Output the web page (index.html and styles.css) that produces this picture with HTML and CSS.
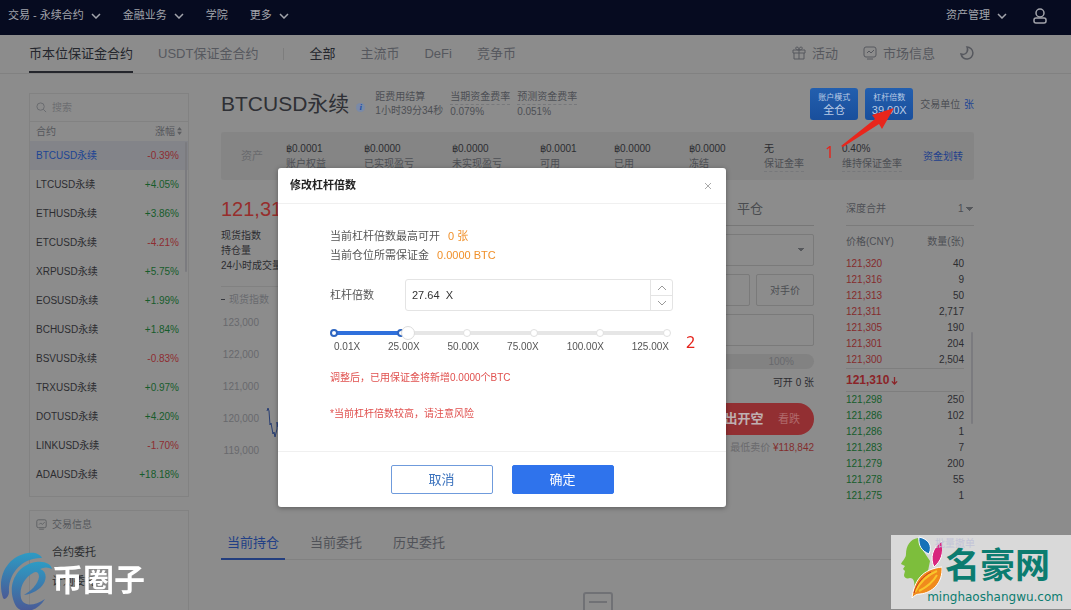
FILE: index.html
```html
<!DOCTYPE html>
<html lang="zh-CN">
<head>
    <meta charset="UTF-8">
    <meta name="viewport" content="width=device-width, initial-scale=1.0">
    <title>BTCUSD永续</title>
    <link rel="stylesheet" href="styles.css">
</head>
<body>
    <header class="topbar">
      <a href="#">交易 - 永续合约 <svg class="chevron" viewBox="0 0 10 6"><path d="M1 1l4 4 4-4"/></svg></a>
      <a href="#">金融业务 <svg class="chevron" viewBox="0 0 10 6"><path d="M1 1l4 4 4-4"/></svg></a>
      <a href="#">学院</a>
      <a href="#">更多 <svg class="chevron" viewBox="0 0 10 6"><path d="M1 1l4 4 4-4"/></svg></a>
      <a href="#" class="push">资产管理 <svg class="chevron" viewBox="0 0 10 6"><path d="M1 1l4 4 4-4"/></svg></a>
      <a href="#" class="account" aria-label="账户"><svg class="user" viewBox="0 0 14 16"><circle cx="7" cy="5" r="4"/><rect x="1" y="10" width="12" height="5" rx="2"/></svg></a>
    </header>

    <nav class="subnav">
      <a href="#" class="active">币本位保证金合约</a>
      <a href="#">USDT保证金合约</a>
      <span class="divider"></span>
      <a href="#" class="dark">全部</a>
      <a href="#">主流币</a>
      <a href="#">DeFi</a>
      <a href="#">竞争币</a>
      <a href="#" class="push"><svg class="icon" viewBox="0 0 14 14"><path d="M1 4h12v3H1zM2 7v6h10V7M7 4v9M7 4C3 4 3 1 5 1s2 3 2 3 0-3 2-3 2 3-2 3"/></svg>活动</a>
      <a href="#"><svg class="icon" viewBox="0 0 14 14"><path d="M3 1h8a2 2 0 0 1 2 2v6a2 2 0 0 1-2 2H3a2 2 0 0 1-2-2V3a2 2 0 0 1 2-2zM4 13h6M4 7l2-2 2 2 3-3"/></svg>市场信息</a>
      <a href="#" aria-label="夜间模式"><svg class="icon moon" viewBox="0 0 14 14"><path d="M7 1a6 6 0 1 1-6 7c3 1 5 0 6-2s1-3 0-5z"/></svg></a>
    </nav>

    <main class="page">
      <aside class="sidebar">
        <section class="box market">
          <label class="search">
            <svg class="lens" viewBox="0 0 12 12"><circle cx="5" cy="5" r="4"/><path d="M8 8l3 3"/></svg>
            <input type="text" placeholder="搜索">
          </label>
          <table class="contracts">
            <thead><tr><th>合约</th><th>涨幅<svg class="sort" viewBox="0 0 6 10"><path d="M3 0l3 4H0zM3 10L0 6h6z"/></svg></th></tr></thead>
            <tbody>
              <tr class="current"><td>BTCUSD永续</td><td class="down">-0.39%</td></tr>
              <tr><td>LTCUSD永续</td><td class="up">+4.05%</td></tr>
              <tr><td>ETHUSD永续</td><td class="up">+3.86%</td></tr>
              <tr><td>ETCUSD永续</td><td class="down">-4.21%</td></tr>
              <tr><td>XRPUSD永续</td><td class="up">+5.75%</td></tr>
              <tr><td>EOSUSD永续</td><td class="up">+1.99%</td></tr>
              <tr><td>BCHUSD永续</td><td class="up">+1.84%</td></tr>
              <tr><td>BSVUSD永续</td><td class="down">-0.83%</td></tr>
              <tr><td>TRXUSD永续</td><td class="up">+0.97%</td></tr>
              <tr><td>DOTUSD永续</td><td class="up">+4.20%</td></tr>
              <tr><td>LINKUSD永续</td><td class="down">-1.70%</td></tr>
              <tr><td>ADAUSD永续</td><td class="up">+18.18%</td></tr>
            </tbody>
          </table>
          <span class="scrollbar"></span>
        </section>
        <section class="box info">
          <h2><svg class="icon" viewBox="0 0 14 14"><path d="M3 1h8a2 2 0 0 1 2 2v6a2 2 0 0 1-2 2H3a2 2 0 0 1-2-2V3a2 2 0 0 1 2-2zM4 13h6M4 7l2-2 2 2 3-3"/></svg>交易信息</h2>
          <a href="#">合约委托</a>
          <a href="#">计划委托</a>
        </section>
      </aside>

      <div class="content">
        <div class="heading">
          <h1>BTCUSD永续</h1>
          <span class="tip">i</span>
          <dl class="rates">
            <div><dt>距费用结算</dt><dd>1小时39分34秒</dd></div>
            <div class="dashed"><dt>当期资金费率</dt><dd>0.079%</dd></div>
            <div class="dashed"><dt>预测资金费率</dt><dd>0.051%</dd></div>
          </dl>
          <button class="mode"><small>账户模式</small>全仓</button>
          <button class="mode"><small>杠杆倍数</small>39.00X</button>
          <span class="unit">交易单位 <a href="#">张</a></span>
        </div>

        <div class="assets">
          <span class="label">资产</span>
          <div><b>฿0.0001</b><span>账户权益</span></div>
          <div><b>฿0.0000</b><span>已实现盈亏</span></div>
          <div><b>฿0.0000</b><span>未实现盈亏</span></div>
          <div><b>฿0.0001</b><span>可用</span></div>
          <div><b>฿0.0000</b><span>已用</span></div>
          <div><b>฿0.0000</b><span>冻结</span></div>
          <div class="dashed"><b>无</b><span>保证金率</span></div>
          <div class="dashed"><b>0.40%</b><span>维持保证金率</span></div>
          <a href="#">资金划转</a>
        </div>

        <div class="trade">
          <section class="chart">
            <strong class="price">121,310</strong>
            <ul class="facts"><li>现货指数</li><li>持仓量</li><li>24小时成交量</li></ul>
            <div class="legend"><span>现货指数</span><span></span></div>
            <div class="plot">
              <ol class="axis"><li>123,000</li><li>122,000</li><li>121,000</li><li>120,000</li><li>119,000</li></ol>
              <svg class="line" viewBox="0 0 40 160"><path d="M1 104l1-3 1 3 1 14 1-2 2 11 1-2 1 5 2-8 0-7 1 5 1-9 2 6"/></svg>
            </div>
          </section>

          <section class="order">
            <div class="order-tabs"><a href="#">开仓</a><a href="#">平仓</a></div>
            <select class="field" aria-label="委托类型"><option></option></select>
            <div class="pair">
              <input class="field" type="text" aria-label="价格">
              <button class="field">对手价</button>
            </div>
            <input class="field" type="text" aria-label="数量">
            <div class="percent"><span>100%</span></div>
            <p class="open">可开 0 张</p>
            <button class="sell">卖出开空 <small>看跌</small></button>
            <p class="ask">最低卖价 <b>¥118,842</b></p>
          </section>

          <section class="book">
            <div class="depth"><label for="depth">深度合并</label><select id="depth"><option>1</option></select></div>
            <table>
              <thead><tr><th>价格(CNY)</th><th>数量(张)</th></tr></thead>
              <tbody class="asks">
                <tr><td>121,320</td><td>40</td></tr>
                <tr><td>121,316</td><td>9</td></tr>
                <tr><td>121,313</td><td>50</td></tr>
                <tr><td>121,311</td><td>2,717</td></tr>
                <tr><td>121,305</td><td>190</td></tr>
                <tr><td>121,301</td><td>204</td></tr>
                <tr><td>121,300</td><td>2,504</td></tr>
              </tbody>
              <tbody class="last"><tr><td colspan="2">121,310<svg class="arrow-down" viewBox="0 0 8 10"><path d="M4 1v8M1 6l3 3 3-3"/></svg></td></tr></tbody>
              <tbody class="bids">
                <tr><td>121,298</td><td>250</td></tr>
                <tr><td>121,286</td><td>102</td></tr>
                <tr><td>121,286</td><td>1</td></tr>
                <tr><td>121,283</td><td>7</td></tr>
                <tr><td>121,279</td><td>200</td></tr>
                <tr><td>121,278</td><td>55</td></tr>
                <tr><td>121,275</td><td>1</td></tr>
              </tbody>
            </table>
            <span class="scrollbar"></span>
          </section>
        </div>

        <nav class="tabs">
          <a href="#" class="active">当前持仓</a>
          <a href="#">当前委托</a>
          <a href="#">历史委托</a>
        </nav>
        <svg class="empty" viewBox="0 0 30 30"><rect x="1" y="1" width="28" height="28" rx="2"/><path d="M6 10h18"/></svg>
      </div>
    </main>

    <div class="overlay">
      <form class="modal" role="dialog" aria-labelledby="modal-title">
        <header class="modal-head">
          <h2 id="modal-title">修改杠杆倍数</h2>
          <button type="button" class="close" aria-label="关闭"><svg viewBox="0 0 8 8"><path d="M1 1l6 6M7 1L1 7"/></svg></button>
        </header>
        <div class="modal-body">
          <p>当前杠杆倍数最高可开 <em>0 张</em></p>
          <p>当前仓位所需保证金 <em>0.0000 BTC</em></p>
          <div class="lever">
            <label for="lever">杠杆倍数</label>
            <div class="stepper">
              <input id="lever" type="text" value="27.64  X">
              <div class="steps">
                <button type="button" aria-label="增加"><svg class="chevron" viewBox="0 0 10 6"><path d="M1 5l4-4 4 4"/></svg></button>
                <button type="button" aria-label="减少"><svg class="chevron" viewBox="0 0 10 6"><path d="M1 1l4 4 4-4"/></svg></button>
              </div>
            </div>
          </div>
          <div class="slider">
            <div class="dots"><i class="on"></i><i class="on"></i><i></i><i></i><i></i><i></i></div>
            <input type="range" min="0" max="125" step="0.01" value="27.64" aria-label="杠杆倍数">
          </div>
          <div class="marks"><span>0.01X</span><span>25.00X</span><span>50.00X</span><span>75.00X</span><span>100.00X</span><span>125.00X</span></div>
          <p class="warn">调整后，已用保证金将新增0.0000个BTC</p>
          <p class="warn">*当前杠杆倍数较高，请注意风险</p>
        </div>
        <footer class="modal-foot">
          <button type="button" class="cancel">取消</button>
          <button type="button" class="confirm">确定</button>
        </footer>
      </form>
    </div>

    <!-- step marks -->
    <span class="step step-one">1</span>
    <svg class="pointer" viewBox="0 0 56 42"><path d="M2 39L36 12l-3-4L55 1 43 22l-3-5L4 40z"/></svg>
    <span class="step step-two">2</span>

    <div class="stamp-left">
      <svg viewBox="0 0 52 58">
        <defs><linearGradient id="swirl" x1="0" y1="0" x2="0" y2="1"><stop offset="0" stop-color="#2d9bc4"/><stop offset="1" stop-color="#4a5a96"/></linearGradient></defs>
        <path fill="url(#swirl)" d="M3 46C-4 24 8 4 28 1c7-1 12 1 14 5C24 5 8 20 9 40c0 4-4 9-6 6z"/>
        <path fill="url(#swirl)" d="M14 50C7 32 17 13 36 10c9-1 15 2 16 7-4-2-8-2-12 0 6 2 7 8 4 14-4 7-12 11-20 12 7-4 14-11 15-18 0-5-3-6-6-4-9 5-14 15-12 25 2 8 12 9 24 1-5 8-12 12-19 12-6 0-10-3-12-9z"/>
      </svg>
      <span>币圈子</span>
    </div>

    <div class="stamp-right">
      <svg viewBox="0 0 42 64">
        <path fill="#7dbe3c" d="M18 2C10 3 6 10 6 18c0 4-3 6-5 10l4 2-2 3 2 2-1 4c0 3 3 4 6 3 4 0 5 4 4 11l12-8 4-20-8-12z"/>
        <path fill="#1672b8" stroke="#fff" d="M19 1c9 2 14 8 10 17-7-3-11-8-10-17z"/>
        <path fill="#d8257d" stroke="#fff" d="M42 5c2 13-1 20-8 26-4-9-2-19 8-26z"/>
        <path fill="#f08a1c" stroke="#fff" d="M12 62C14 45 22 33 42 31c1 16-10 26-22 27-4 0-6 2-8 4z"/>
        <path fill="none" stroke="#f9c62b" stroke-width="2" d="M15 56c5-10 12-17 22-21M19 55c8-4 14-9 18-16"/>
        <path fill="none" stroke="#c8391e" d="M14 57c3-10 9-17 17-21"/>
      </svg>
      <strong>名豪网</strong>
      <span>minghaoshangwu.com</span>
      <a href="#">批量撤单</a>
    </div>
</body>
</html>
```

FILE: styles.css
```css
* {
  box-sizing: border-box;
}

body {
  margin: 0;
  height: 100vh;
  overflow: hidden;
  background: #8c8c8c;
  color: #2c2d31;
  font: 10px/15px "Liberation Sans", "Noto Sans CJK SC", sans-serif;
}

a {
  color: inherit;
  text-decoration: none;
}

h1, h2, p, dl, dd, ul, ol {
  margin: 0;
  padding: 0;
  font-weight: normal;
  list-style: none;
}

button, input, select {
  margin: 0;
  padding: 0;
  border: 0;
  background: none;
  color: inherit;
  font: inherit;
}

svg {
  fill: none;
  stroke: currentColor;
  flex: none;
}

table {
  width: 100%;
  border-collapse: collapse;
}

th, td {
  padding: 0;
  font-weight: normal;
  text-align: left;
}

th:last-child, td:last-child {
  text-align: right;
}

.push {
  margin-left: auto;
}

.chevron {
  width: 10px;
  height: 6px;
  stroke-width: 1.5;
}

.icon {
  width: 14px;
  height: 14px;
}

/* top bar */
.topbar {
  display: flex;
  align-items: center;
  gap: 22px;
  height: 35px;
  padding: 0 24px 4px 8px;
  background: #060b20;
  color: #a2a4ab;
  font-size: 11px;
}

.topbar a {
  display: flex;
  align-items: center;
  gap: 7px;
}

.topbar .account {
  margin-left: 4px;
}

.user {
  width: 14px;
  height: 16px;
  stroke-width: 1.5;
}

.subnav {
  display: flex;
  align-items: center;
  gap: 25px;
  height: 39px;
  padding: 0 97px 0 29px;
  border-bottom: 1px solid #818181;
  color: #56585e;
  font-size: 13px;
}

.subnav a {
  display: flex;
  align-items: center;
  gap: 6px;
  height: 38px;
  padding-bottom: 2px;
}

.subnav .active {
  padding-bottom: 0;
  border-bottom: 2px solid #24262c;
  color: #24262c;
}

.subnav .dark {
  color: #24262c;
}

.subnav .divider {
  width: 1px;
  height: 12px;
  background: #7d7d7d;
}

.moon {
  stroke-width: 1.5;
}

.page {
  display: flex;
  gap: 32px;
  padding: 13px 97px 0 29px;
}

.sidebar {
  flex: none;
  width: 160px;
  padding-top: 6px;
}

.box {
  position: relative;
  border: 1px solid #828282;
}

.scrollbar {
  position: absolute;
  right: 1px;
  top: 48px;
  width: 2px;
  height: 130px;
  border-radius: 1px;
  background: #7b7b7f;
}

.market {
  margin-bottom: 13px;
  padding-bottom: 7px;
}

.search {
  display: flex;
  align-items: center;
  gap: 5px;
  height: 28px;
  padding: 0 6px;
  border-bottom: 1px solid #828282;
  color: #67696d;
}

.search input {
  min-width: 0;
  flex: 1;
}

.search input::placeholder {
  color: #6d6e71;
}

.lens {
  width: 11px;
  height: 11px;
}

.contracts th {
  height: 19px;
  padding: 0 6px;
  color: #54565b;
}

.sort {
  width: 5px;
  height: 8px;
  margin-left: 2px;
  fill: #5c5d60;
  stroke: none;
}

.contracts td {
  height: 29px;
  padding: 0 9px 0 6px;
}

.current {
  background: #838489;
  color: #1d4494;
}

.up {
  color: #165c2b;
}

.down {
  color: #8e2c31;
}

.info {
  padding: 3px 6px 14px;
  color: #2b2c2f;
  line-height: 29px;
}

.info h2 {
  display: flex;
  align-items: center;
  gap: 5px;
  height: 20px;
  margin-bottom: 4px;
  color: #57595d;
  font-size: 10px;
}

.info .icon {
  width: 11px;
  height: 11px;
}

.info a {
  display: block;
  padding-left: 16px;
  font-size: 11px;
}

/* heading row */
.content {
  flex: 1;
  min-width: 0;
}

.heading {
  display: flex;
  align-items: center;
  gap: 7px;
  height: 34px;
}

.heading h1 {
  font-size: 21px;
  line-height: 34px;
  color: #2f3035;
}

.tip {
  width: 9px;
  height: 9px;
  margin: 6px 3px 0 0;
  border-radius: 50%;
  background: #7a8aa8;
  color: #1d4fa8;
  font: italic bold 9px/9px "Liberation Serif", serif;
  text-align: center;
}

.rates {
  display: flex;
  gap: 7px;
  margin-right: auto;
  color: #4d4f54;
  line-height: 14px;
}

.dashed dt, .dashed span {
  border-bottom: 1px dashed #77787b;
}

.mode {
  width: 48px;
  height: 32px;
  border-radius: 3px;
  background: linear-gradient(#235fae, #194f9c);
  color: #b9cbe5;
  font-size: 11px;
  line-height: 12px;
}

.mode small {
  display: block;
  font-size: 8px;
}

.unit {
  color: #4d4f54;
}

.unit a {
  margin-left: 1px;
  color: #1d4494;
}

.assets {
  display: grid;
  grid-template-columns: 45fr 78fr 88fr 88fr 74fr 75fr 75fr 78fr 81fr 51fr;
  align-items: center;
  height: 48px;
  margin-top: 11px;
  padding-left: 20px;
  background: #858585;
  border-radius: 3px;
  color: #4d4f54;
}

.assets b, .assets span {
  display: block;
  width: fit-content;
  font-weight: normal;
}

.assets b {
  color: #2c2d31;
}

.assets .label {
  color: #696a6d;
  font-size: 11px;
}

.assets a {
  color: #223f8c;
}

.trade {
  display: grid;
  grid-template-columns: 1fr 256px 128px;
  gap: 32px;
  padding-top: 18px;
}

/* chart */
.price {
  display: block;
  color: #972e2c;
  font-size: 20px;
  font-weight: normal;
  line-height: 22px;
}

.facts {
  padding: 8px 0 13px;
  line-height: 15px;
}

.legend {
  display: flex;
  gap: 9px;
  border-top: 1px solid #818181;
  padding: 5px 0 0;
  color: #686a6e;
}

.legend span {
  display: flex;
  align-items: center;
  gap: 4px;
}

.legend span::before {
  content: "";
  width: 4px;
  height: 1px;
  background: #35373d;
}

.plot {
  display: flex;
  gap: 7px;
}

.axis {
  width: 38px;
  color: #68696d;
  line-height: 32px;
  text-align: right;
}

.line {
  width: 40px;
  height: 160px;
  color: #283e73;
}

/* order form */
.order-tabs {
  display: grid;
  grid-template-columns: 1fr 1fr;
  height: 28px;
  margin-bottom: 8px;
  border-bottom: 1px solid #777;
  color: #4a4c50;
  font-size: 13px;
  line-height: 22px;
  text-align: center;
}

.field {
  display: block;
  width: 100%;
  height: 32px;
  margin-bottom: 8px;
  border: 1px solid #7a7a7a;
  border-radius: 2px;
  color: #4b4d52;
}

select {
  appearance: none;
  background: linear-gradient(to bottom right, #55575b 50%, transparent 50%) right 8px center / 4px 4px no-repeat, linear-gradient(to bottom left, #55575b 50%, transparent 50%) right 12px center / 4px 4px no-repeat;
}

.pair {
  display: grid;
  grid-template-columns: 1fr 58px;
  gap: 6px;
}

.percent {
  height: 15px;
  padding-right: 20px;
  border-radius: 8px;
  background: #828282;
  color: #68696d;
  text-align: right;
}

.open {
  padding: 6px 0 13px;
  text-align: right;
}

.sell {
  display: block;
  width: 126px;
  height: 32px;
  margin-left: auto;
  padding-right: 14px;
  border-radius: 16px;
  background: #922f32;
  color: #bfb0b2;
  font-size: 13px;
  font-weight: bold;
  text-align: right;
}

.sell small {
  margin-left: 11px;
  color: #b06a6c;
  font-size: 11px;
  font-weight: normal;
}

.ask {
  padding-top: 5px;
  color: #6a6a6c;
  text-align: right;
}

.ask b {
  color: #832e2e;
  font-weight: normal;
}

/* order book */
.book {
  position: relative;
}

.book .scrollbar {
  top: 134px;
  height: 92px;
}

.depth {
  display: flex;
  justify-content: space-between;
  height: 28px;
  border-bottom: 1px solid #7b7b7b;
  color: #4d4f54;
  line-height: 22px;
}

.depth select {
  width: 16px;
  height: 22px;
  background-position: right 0 center, right 4px center;
}

.book table {
  width: 118px;
}

.book th {
  height: 30px;
  color: #4d4f54;
}

.book td {
  height: 16px;
  line-height: 16px;
}

.asks td:first-child {
  color: #852b2d;
}

.bids td:first-child {
  color: #155c2b;
}

.book .last td {
  height: 23px;
  border-top: 1px solid #7e7e7e;
  border-bottom: 1px solid #7e7e7e;
  color: #8b2428;
  font-size: 12px;
  font-weight: bold;
  text-align: left;
}

.arrow-down {
  width: 7px;
  height: 9px;
  margin-left: 2px;
  vertical-align: -1px;
  stroke-width: 1.5;
}

.tabs {
  display: flex;
  gap: 19px;
  height: 34px;
  margin-top: 22px;
  border-bottom: 1px solid #818181;
  color: #505258;
  font-size: 13px;
  line-height: 34px;
}

.tabs a {
  height: 34px;
  padding: 0 6px;
}

.tabs .active {
  border-bottom: 2px solid #233e7e;
  color: #213f86;
}

.empty {
  display: block;
  width: 30px;
  height: 30px;
  margin: 32px auto 0;
  color: #707175;
  stroke-width: 2;
}

/* leverage dialog */
.overlay {
  position: fixed;
  inset: 0;
  padding: 168px 67px 0 0;
  display: flex;
  justify-content: center;
  align-items: flex-start;
}

.modal {
  width: 448px;
  border-radius: 3px;
  background: #fff;
  box-shadow: 0 1px 5px rgba(0, 0, 0, 0.35);
  color: #555;
  font-size: 11px;
}

.modal-head {
  display: flex;
  align-items: center;
  justify-content: space-between;
  height: 36px;
  padding: 0 14px 0 12px;
  border-bottom: 1px solid #f0f0f0;
}

.modal-head h2 {
  color: #222;
  font-size: 11px;
  font-weight: bold;
}

.close {
  display: flex;
  color: #aaa;
}

.close svg {
  width: 8px;
  height: 8px;
}

.modal-body {
  padding: 23px 53px 27px 52px;
  line-height: 19px;
}

.modal-body em {
  margin-left: 5px;
  color: #f0902a;
  font-style: normal;
}

.lever {
  display: flex;
  align-items: center;
  justify-content: space-between;
  margin-top: 14px;
}

.stepper {
  display: flex;
  width: 268px;
  height: 32px;
  border: 1px solid #e4e4e4;
  border-radius: 3px;
}

.stepper input {
  flex: 1;
  min-width: 0;
  padding-left: 6px;
  color: #333;
  white-space: pre;
}

.steps {
  display: grid;
  grid-template-rows: 1fr 1fr;
  width: 22px;
  border-left: 1px solid #e4e4e4;
  color: #999;
}

.steps button {
  display: flex;
  align-items: center;
  justify-content: center;
}

.steps button + button {
  border-top: 1px solid #e4e4e4;
}

.steps .chevron {
  stroke-width: 1;
}

.slider {
  position: relative;
  height: 14px;
  margin: 15px -1px 0 -3px;
}

.dots {
  display: flex;
  justify-content: space-between;
  align-items: center;
  height: 14px;
  padding: 0 3px;
  background: linear-gradient(to right, #2f70dc 23%, #e6e6e6 23%) center / calc(100% - 14px) 4px no-repeat;
}

.dots i {
  width: 8px;
  height: 8px;
  border: 1px solid #e0e0e0;
  border-radius: 50%;
  background: #fff;
}

.dots .on {
  border: 2px solid #2f66c0;
}

.slider input {
  position: absolute;
  inset: 0;
  width: 100%;
  height: 14px;
  appearance: none;
}

.slider input::-webkit-slider-thumb {
  appearance: none;
  width: 14px;
  height: 14px;
  border: 1px solid #dcdcdc;
  border-radius: 50%;
  background: #fff;
}

.marks {
  display: flex;
  justify-content: space-between;
  padding: 0 4px;
  font-size: 10px;
  line-height: 14px;
}

.warn {
  margin-top: 16px;
  color: #e0504e;
  font-size: 10px;
  line-height: 20px;
}

.marks + .warn {
  margin-top: 14px;
}

.modal-foot {
  display: flex;
  justify-content: center;
  gap: 19px;
  padding: 13px 0;
  border-top: 1px solid #f0f0f0;
}

.modal-foot button {
  width: 102px;
  height: 29px;
  border: 1px solid #2f73ec;
  border-radius: 2px;
  font-size: 13px;
}

.modal-foot .cancel {
  border-color: #6f9bdc;
  color: #3b72bd;
}

.confirm {
  background: #2f73ec;
  color: #fff;
}

.step {
  position: fixed;
  color: #e5231b;
  font: 16px/16px "Noto Sans", sans-serif;
}

.step-one {
  left: 825px;
  top: 144px;
}

.step-two {
  left: 686px;
  top: 334px;
}

.pointer {
  position: fixed;
  left: 839px;
  top: 107px;
  width: 56px;
  height: 42px;
  fill: #e8261c;
  stroke: none;
}

/* corner stamps */
.stamp-left {
  position: fixed;
  left: 0;
  bottom: 0;
  display: flex;
  align-items: center;
  color: #fff;
  font-size: 31px;
  font-weight: bold;
  line-height: 58px;
}

.stamp-left svg {
  width: 52px;
  height: 58px;
  stroke: none;
}

.stamp-right {
  position: fixed;
  right: 0;
  bottom: 1px;
  width: 180px;
  height: 74px;
  background: #d9d9d9;
  color: #0b7c70;
}

.stamp-right svg {
  position: absolute;
  left: 9px;
  top: 1px;
  width: 42px;
  height: 64px;
  stroke: none;
}

.stamp-right strong {
  position: absolute;
  left: 54px;
  top: 11px;
  font-size: 35px;
  line-height: 40px;
}

.stamp-right span {
  position: absolute;
  right: 8px;
  bottom: 4px;
  font: 12px/16px "DejaVu Sans", sans-serif;
}

.stamp-right a {
  position: absolute;
  left: 44px;
  top: 1px;
  color: #c3c4d8;
}
```
